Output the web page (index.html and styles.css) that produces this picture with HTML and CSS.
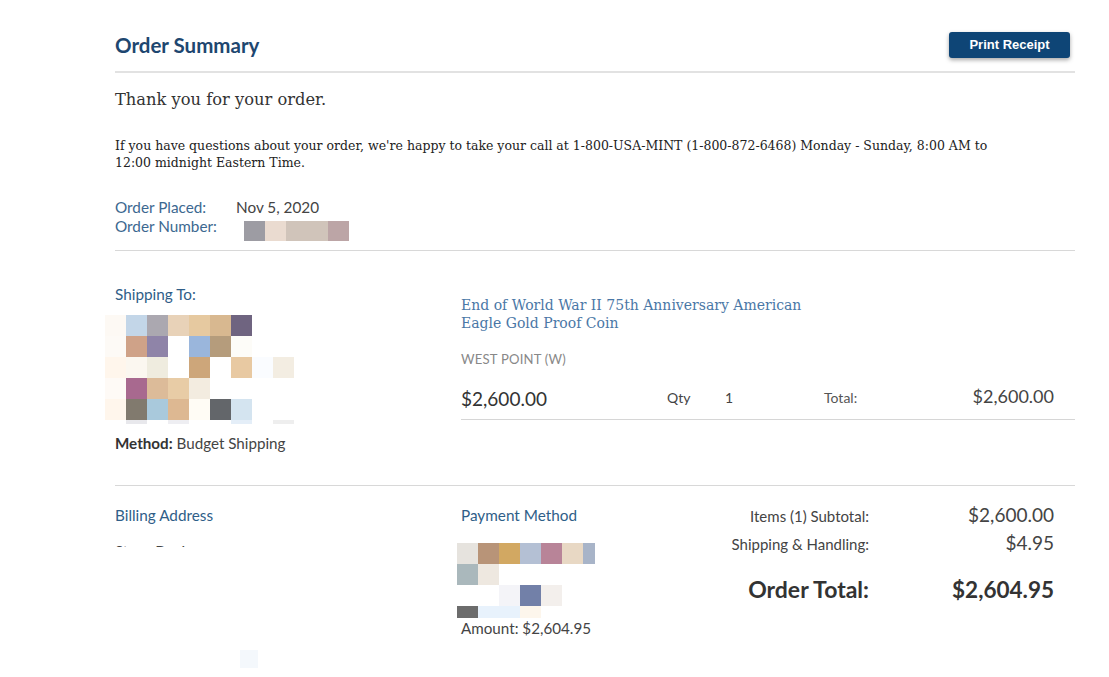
FILE: index.html
```html
<!DOCTYPE html>
<html>
<head>
<meta charset="utf-8">
<link rel="stylesheet" href="styles.css">
</head>
<body>
<div class="page">
  <div class="header">
    <h1 class="title">Order Summary</h1>
    <button class="print">Print Receipt</button>
  </div>
  <hr class="rule">
  <p class="thanks">Thank you for your order.</p>
  <p class="info">If you have questions about your order, we're happy to take your call at 1-800-USA-MINT (1-800-872-6468) Monday - Sunday, 8:00 AM to 12:00 midnight Eastern Time.</p>
  <div class="meta">
    <div class="meta-row"><span class="meta-label">Order Placed:</span><span class="meta-value">Nov 5, 2020</span></div>
    <div class="meta-row"><span class="meta-label">Order Number:</span>
      <span class="pix pix-order">
        <i style="background:#9d9ca3"></i><i style="background:#eadbd0"></i><i style="background:#d0c4ba"></i><i style="background:#d0c4ba"></i><i style="background:#bca5a6"></i>
      </span>
    </div>
  </div>
  <hr class="rule rule-2">

  <div class="ship">
    <div class="ship-left">
      <div class="label">Shipping To:</div>
      <div class="pix pix-ship">
        <i style="background:#fdf9f4"></i><i style="background:#c3d6e8"></i><i style="background:#aba8b0"></i><i style="background:#e8d2b8"></i><i style="background:#e6c9a0"></i><i style="background:#d8b890"></i><i style="background:#6f6480"></i><i></i><i></i>
        <i style="background:#fdfaf6"></i><i style="background:#cfa288"></i><i style="background:#8f84a8"></i><i></i><i style="background:#9ab6dc"></i><i style="background:#b59c7c"></i><i style="background:#fdfcf8"></i><i></i><i></i>
        <i style="background:#fff6ec"></i><i style="background:#fbf7f0"></i><i style="background:#efecdf"></i><i></i><i style="background:#cda67a"></i><i></i><i style="background:#e8c9a2"></i><i style="background:#fafcff"></i><i style="background:#f3ede2"></i>
        <i style="background:#fefaf6"></i><i style="background:#a8698f"></i><i style="background:#dcbb99"></i><i style="background:#e8cca6"></i><i style="background:#f3ece0"></i><i></i><i></i><i></i><i></i>
        <i style="background:#fff6ec"></i><i style="background:#817a6e"></i><i style="background:#a9c9dc"></i><i style="background:#ddb892"></i><i style="background:#fffcf5"></i><i style="background:#63666a"></i><i style="background:#d4e4f0"></i><i></i><i></i>
        <i class="p"></i><i class="p" style="background:#e8e8ec"></i><i class="p"></i><i class="p" style="background:#eeeef2"></i><i class="p"></i><i class="p"></i><i class="p" style="background:#e4eef8"></i><i class="p"></i><i class="p" style="background:#eeeeee"></i>
      </div>
      <div class="method"><b>Method:</b> Budget Shipping</div>
    </div>
    <div class="item">
      <div class="item-name">End of World War II 75th Anniversary American<br>Eagle Gold Proof Coin</div>
      <div class="item-mint">WEST POINT (W)</div>
      <div class="item-row">
        <span class="item-price">$2,600.00</span>
        <span class="item-qty">Qty</span>
        <span class="item-count">1</span>
        <span class="item-total-label">Total:</span>
        <span class="item-total">$2,600.00</span>
      </div>
    </div>
  </div>

  <hr class="rule rule-3">

  <div class="bottom">
    <div class="billing">
      <div class="label">Billing Address</div>
      <div class="clipped"><span>Steve Davis</span></div>
    </div>
    <div class="payment">
      <div class="label">Payment Method</div>
      <div class="pix pix-pay">
        <i style="background:#e6e3de"></i><i style="background:#b89478"></i><i style="background:#d2a862"></i><i style="background:#b4c0d4"></i><i style="background:#b88498"></i><i style="background:#e8d8c4"></i><i style="background:#a8b4c8"></i>
        <i style="background:#aab8bc"></i><i style="background:#eee8e0"></i><i></i><i></i><i></i><i></i><i></i>
        <i></i><i></i><i style="background:#f4f4f8"></i><i style="background:#7280a8"></i><i style="background:#f3efec"></i><i></i><i></i>
        <i class="q" style="background:#6c6c6c"></i><i class="q" style="background:#e8f2fc"></i><i class="q" style="background:#e8f2fc"></i><i class="q" style="background:#fdf6ec"></i><i class="q"></i><i class="q"></i><i class="q"></i>
      </div>
      <div class="amount">Amount: $2,604.95</div>
    </div>
    <div class="summary">
      <div class="sum-row"><span class="sum-label">Items (1) Subtotal:</span><span class="sum-value">$2,600.00</span></div>
      <div class="sum-row sum-ship"><span class="sum-label">Shipping &amp; Handling:</span><span class="sum-value">$4.95</span></div>
      <div class="sum-row sum-total"><span class="sum-label">Order Total:</span><span class="sum-value">$2,604.95</span></div>
    </div>
  </div>
  <div class="faint"></div>
</div>
</body>
</html>
```

FILE: styles.css
```css
html, body {
  margin: 0;
  padding: 0;
  background: #fff;
}
body {
  font-family: Lato, "Open Sans", sans-serif;
  color: #333;
}
.page {
  width: 960px;
  margin-left: 115px;
  padding-top: 31px;
}
.header {
  display: flex;
  justify-content: space-between;
  align-items: center;
  height: 27px;
  padding-right: 5px;
}
.title {
  margin: 0;
  font-size: 20.5px;
  font-weight: 700;
  color: #1e4770;
}
.print {
  width: 121px;
  height: 26px;
  border: 0;
  border-radius: 3px;
  background: #0e4576;
  color: #fff;
  font-family: "Liberation Sans", Arial, sans-serif;
  font-weight: 700;
  font-size: 13px;
  box-shadow: 0 2px 4px rgba(0,0,0,0.35);
  padding: 0;
}
.rule {
  border: 0;
  height: 2px;
  background: #e2e2e2;
  margin: 13px 0 0;
}
.thanks {
  margin: 17px 0 0;
  font-family: "DejaVu Serif", serif;
  font-size: 16.3px;
  color: #333;
  line-height: 20px;
}
.info {
  margin: 27px 0 0;
  width: 900px;
  font-family: "DejaVu Serif", serif;
  font-size: 12.5px;
  line-height: 17px;
  color: #222;
}
.meta {
  margin-top: 26px;
  font-size: 15.3px;
  line-height: 20px;
}
.meta-row {
  display: flex;
  align-items: flex-start;
  height: 19px;
}
.meta-row + .meta-row {
  height: 25px;
}
.meta-label {
  width: 121px;
  color: #3c6890;
}
.meta-value {
  color: #444;
}
.pix {
  display: grid;
}
.pix i {
  display: block;
  height: 21px;
}
.pix-order {
  grid-template-columns: repeat(5, 21px);
  margin-left: 8px;
  margin-top: 5px;
}
.pix-order i { height: 20px; }
.rule-2 {
  margin-top: 9px;
  height: 1px;
  background: #d8d8d8;
}
.ship {
  display: grid;
  grid-template-columns: 346px 1fr;
  align-items: start;
}
.label {
  font-size: 15.3px;
  color: #2f5e88;
  line-height: 20px;
}
.ship-left {
  padding-top: 33px;
}
.pix-ship {
  grid-template-columns: repeat(9, 21px);
  margin-left: -10px;
  margin-top: 11px;
}
.pix-ship i.p { height: 4px; }
.method {
  margin-top: 9px;
  font-size: 15.2px;
  color: #444;
  line-height: 20px;
}
.method b { color: #333; }
.item {
  padding-top: 45px;
}
.item-name {
  font-family: "DejaVu Serif", serif;
  font-size: 14px;
  line-height: 18px;
  color: #4a77a6;
}
.item-mint {
  margin-top: 18px;
  font-size: 13.1px;
  color: #888;
  letter-spacing: 0.2px;
  line-height: 18px;
}
.item-row {
  display: grid;
  grid-template-columns: 206px 58px 99px 1fr;
  align-items: baseline;
  line-height: 24px;
  padding-right: 21px;
  margin-top: 19px;
  padding-bottom: 6px;
  border-bottom: 1px solid #d6d6d6;
}
.item-price {
  font-size: 19px;
  color: #333;
}
.item-qty, .item-count {
  position: relative;
  top: -3px;
  font-size: 14px;
  color: #444;
}
.item-total-label {
  position: relative;
  top: -3px;
  font-size: 14px;
  color: #555;
  grid-column: 4;
  grid-row: 1;
}
.item-total {
  position: relative;
  top: -3px;
  font-size: 18px;
  color: #444;
  justify-self: end;
  grid-column: 4;
  grid-row: 1;
}
.rule-3 {
  margin-top: 32px;
  height: 1px;
  background: #d8d8d8;
}
.bottom {
  display: grid;
  grid-template-columns: 346px 239px 1fr;
  align-items: start;
  padding-top: 19px;
}
.clipped {
  margin-top: 16px;
  height: 6px;
  overflow: hidden;
  font-size: 15px;
  line-height: 18px;
  color: #444;
}
.clipped span {
  display: block;
  margin-top: 1px;
}
.pix-pay {
  grid-template-columns: repeat(6, 21px) 12px;
  margin-left: -4px;
  margin-top: 18px;
}
.pix-pay i { height: 21px; }
.pix-pay i.q { height: 12px; }
.amount {
  font-size: 15.2px;
  color: #444;
  line-height: 20px;
}
.summary {
  padding-right: 21px;
}
.sum-row {
  display: flex;
  justify-content: flex-end;
  align-items: baseline;
  line-height: 20px;
}
.sum-ship {
  margin-top: 7px;
}
.sum-label {
  font-size: 15px;
  color: #444;
  text-align: right;
}
.sum-value {
  width: 185px;
  text-align: right;
  font-size: 19px;
  color: #444;
}
.sum-total {
  margin-top: 21px;
  line-height: 28px;
}
.sum-total .sum-label {
  font-size: 23px;
  font-weight: 700;
  color: #333;
}
.sum-total .sum-value {
  font-size: 22.5px;
  font-weight: 700;
  color: #333;
}
.faint {
  width: 18px;
  height: 18px;
  background: #f4f8fc;
  margin: 12px 0 0 125px;
}
```
